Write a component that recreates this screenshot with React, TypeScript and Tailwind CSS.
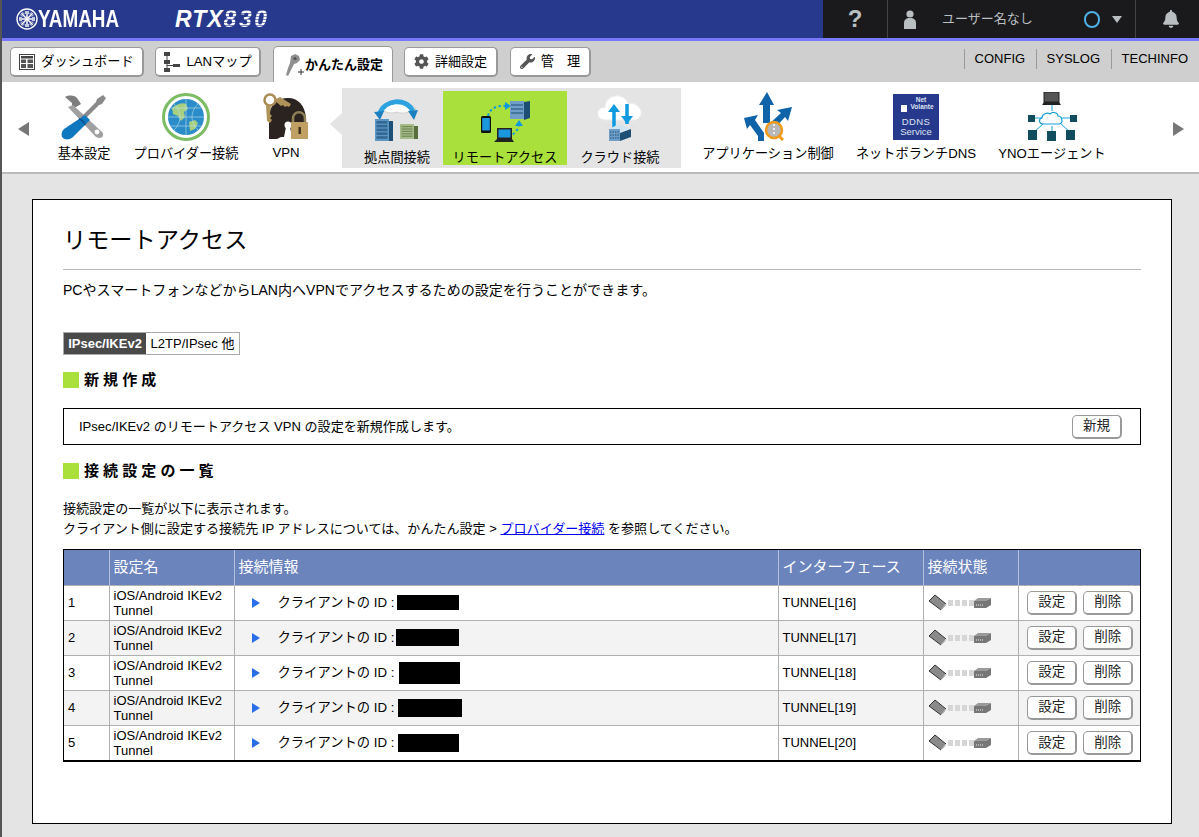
import { FaBell, FaCog, FaWrench } from "react-icons/fa";

const FONT = "[font-family:'Liberation_Sans','Noto_Sans_CJK_JP',sans-serif]";

function YamahaEmblem() {
  const angles = [0, 45, 90, 135];
  return (
    <svg className="shrink-0" width="22" height="22" viewBox="0 0 22 22" fill="none" stroke="#fff">
      <circle cx="11" cy="11" r="10" strokeWidth="1.4" />
      {angles.map((a) => (
        <g key={a} transform={`rotate(${a} 11 11)`}>
          <path d="M11 3v16" strokeWidth="1.5" />
          <path d="M9.4 3v3M12.6 3v3M9.4 19v-3M12.6 19v-3" strokeWidth="0.8" />
        </g>
      ))}
    </svg>
  );
}

function DashboardIcon() {
  return (
    <svg width="16" height="16" viewBox="0 0 16 16">
      <rect x="0.5" y="0.5" width="15" height="15" fill="#fff" stroke="#444" />
      <rect x="2" y="2" width="12" height="2.5" fill="#444" />
      <rect x="2" y="5.5" width="5" height="3.5" fill="#555" />
      <rect x="8.5" y="5.5" width="5.5" height="3.5" fill="#555" />
      <rect x="2" y="10" width="5" height="4" fill="#555" />
      <rect x="8.5" y="10" width="5.5" height="4" fill="#555" />
    </svg>
  );
}

function LanMapIcon() {
  return (
    <svg width="17" height="20" viewBox="0 0 17 20" fill="#444">
      <rect x="1" y="0" width="6" height="4" />
      <rect x="1" y="8" width="6" height="4" />
      <rect x="1" y="16" width="6" height="4" />
      <rect x="10" y="12" width="7" height="3" />
      <path d="M3.5 4h1v12h-1zM4 13h6v1H4z" />
    </svg>
  );
}

function PinIcon() {
  return (
    <svg width="20" height="24" viewBox="0 0 20 24">
      <path d="M6 3l4-2 4 2 1 4-3 3-3 1-3 6-3 6-2-1 2-7 2-5z" fill="#8f8f8f" />
      <circle cx="10" cy="5.5" r="1.6" fill="#555" />
      <path d="M16 16v6M13 19h6" stroke="#333" strokeWidth="1" />
    </svg>
  );
}

function ToolsIcon() {
  return (
    <svg width="48" height="48" viewBox="0 0 48 48">
      <path d="M4 3l7 6 0 4 4 0 5-3-4-6c-3-3-8-3-12-1z" fill="#7d7d7d" transform="translate(1 1)" />
      <path d="M13 12l29 27c2 2 1 6-2 6s-5-2-6-3L8 14z" fill="#a0a0a0" />
      <circle cx="37" cy="39" r="2.4" fill="#fff" />
      <path d="M43 2l3 3-4 6-3 1L24 27l-3-3 15-15 1-3z" fill="#8a8a8a" />
      <path d="M25 22l5 5L13 44c-3 3-8 3-10 1s-2-6 1-9z" fill="#0f76c0" />
      <path d="M19 26c3 1 5 3 6 6" stroke="#0a4f88" strokeWidth="1.5" fill="none" />
    </svg>
  );
}

function GlobeIcon() {
  return (
    <svg width="48" height="48" viewBox="0 0 48 48" fill="none">
      <circle cx="24" cy="24" r="22.5" fill="#fff" stroke="#7cbc62" strokeWidth="3" />
      <circle cx="24" cy="24" r="18" fill="#2a8cc8" />
      <path d="M10 15c4-3 9-6 14-4l2 5-4 3 1 5-4 4-3-5-5-2zM27 29l6-2 3 3-3 6-5 2z" fill="#a6d080" />
      <path d="M6 24h36M24 6v36M12 11c8 8 8 18 0 26M36 11c-8 8-8 18 0 26M9 15h30M9 33h30" stroke="#bfe0ef" strokeWidth="0.6" />
    </svg>
  );
}

function VpnIcon() {
  return (
    <svg width="50" height="48" viewBox="0 0 50 48">
      <path d="M8 46V24C8 12 17 5 27 5s17 7 18 20v21l-9 0-4-2H20l-4 2z" fill="#2b2320" />
      <circle cx="27" cy="32" r="3.5" fill="#fff" />
      <path d="M23 44l2-10h4l2 10z" fill="#fff" />
      <circle cx="9" cy="7" r="5.5" fill="none" stroke="#a98a52" strokeWidth="2.5" />
      <path d="M5 12l1 16 3 2 2-3-2-2 2-2-2-2 1-9zM13 7l6-3 11 7-2 3-2-1-2 1-2-2-2 1z" fill="#b09358" />
      <path d="M32 30v-4c0-9 12-9 12 0v4" fill="none" stroke="#8f7f55" strokeWidth="2.5" />
      <rect x="30" y="29" width="17" height="17" fill="#bfa062" />
      <rect x="37.5" y="34" width="2.4" height="7" fill="#3b2f1c" />
    </svg>
  );
}

function Building({ x, y, w, h, fill, dark }: { x: number; y: number; w: number; h: number; fill: string; dark: string }) {
  const rows = Array.from({ length: 5 }, (_, i) => i);
  return (
    <g>
      <rect x={x} y={y} width={w} height={h} fill={fill} />
      <rect x={x + w} y={y + 2} width={4} height={h - 2} fill={dark} />
      {rows.map((r) => (
        <rect key={r} x={x + 1.5} y={y + 2 + (r * (h - 3)) / 5} width={w - 3} height={(h - 3) / 5 - 1.2} fill={dark} opacity="0.65" />
      ))}
    </g>
  );
}

function SiteIcon() {
  return (
    <svg width="50" height="48" viewBox="0 0 50 48" fill="none">
      <path d="M8 14c2-3 5-3 7-4 3-4 9-4 12-1 4-2 8-1 10 2 3 0 6 1 7 4-2 3-5 3-8 3-4 2-8 1-11 0-5 2-13 1-17-4z" fill="#fff" stroke="#cfcfcf" />
      <path d="M8 19C13 6 33 3 41 17" stroke="#2ea2df" strokeWidth="5" />
      <path d="M2 18l10-1-4 9zM36 17l10-1-4 10z" fill="#1c7fc0" />
      <Building x={3} y={25} w={14} h={22} fill="#5a97c4" dark="#1e4f78" />
      <Building x={28} y={30} w={14} h={15} fill="#a7bc8a" dark="#5a6f3e" />
    </svg>
  );
}

function RemoteIcon() {
  return (
    <svg width="50" height="48" viewBox="0 0 50 48" fill="none">
      <path d="M8 17C10 9 18 6 26 7" stroke="#0f9ae0" strokeWidth="2" strokeDasharray="2.5 2.5" />
      <path d="M25 3l6 4-6 4z" fill="#0f9ae0" />
      <path d="M28 37c6-1 10-5 11-12" stroke="#0f9ae0" strokeWidth="2" strokeDasharray="2.5 2.5" />
      <path d="M35 27l4-6 4 6z" fill="#0f9ae0" />
      <rect x="30" y="2" width="14" height="18" fill="#6f9fc8" />
      <path d="M44 3l6-1v17l-6 2z" fill="#1d4f75" />
      <path d="M31 6h12M31 10h12M31 14h12" stroke="#1d4f75" />
      <rect x="1" y="17" width="10" height="17" rx="1.5" fill="#111" />
      <rect x="2.2" y="19" width="7.6" height="12.5" fill="#1a97dd" />
      <rect x="17" y="29" width="15" height="11" fill="#222" />
      <rect x="18.5" y="30.5" width="12" height="8" fill="#1a97dd" />
      <path d="M14 43l3-3h15l2 3z" fill="#222" />
    </svg>
  );
}

function CloudIcon() {
  return (
    <svg width="46" height="50" viewBox="0 0 46 50" fill="none">
      <path d="M9 28C3 28 0 24 1 20c1-4 5-5 7-4 0-8 6-13 14-12 5 1 8 4 9 8 5-2 11 1 13 7 1 5-3 9-7 9z" fill="#fff" stroke="#eee" />
      <path d="M17 38V18M30 32V12" stroke="#0f9ae0" strokeWidth="3.5" />
      <path d="M11 20l6-8 6 8zM24 24h12l-6 8z" fill="#0f9ae0" />
      <path d="M12 37l10-5 11 5-11 4z" fill="#cfe4f2" />
      <rect x="12" y="37" width="11" height="12" fill="#6f9fc8" />
      <path d="M23 41l11-4v8l-11 4z" fill="#1d4f75" />
      <path d="M13 40h9M13 43h9M13 46h9" stroke="#1d4f75" strokeDasharray="1.5 1" />
    </svg>
  );
}

function AppIcon() {
  return (
    <svg width="50" height="50" viewBox="0 0 50 50">
      <path d="M24 0l7 13h-4v18h-7V13h-4z" fill="#0f63a8" />
      <path d="M49 15l-4 14-3-4-12 13-5-5 13-12-4-3z" fill="#0f63a8" />
      <path d="M1 26l14-3-3 5 9 13v8h-6v-5l-8-11-3 4z" fill="#0f63a8" />
      <circle cx="31" cy="38" r="8" fill="#b8b8b8" stroke="#f09a1a" strokeWidth="2.5" />
      <path d="M31 32v12" stroke="#fff" strokeWidth="1.5" strokeDasharray="2 2" />
      <path d="M36 44l4 4" stroke="#f09a1a" strokeWidth="3" />
    </svg>
  );
}

function NetVolanteBadge() {
  return (
    <div className="relative flex h-[46px] w-[46px] flex-col items-center bg-[#27398c] pt-[3px] text-[#dfe3f2]">
      <span className="absolute left-[8px] top-[11px] h-[7px] w-[6px] bg-white" />
      <div className="ml-[10px] text-[6.5px] font-bold leading-[6px]">Net</div>
      <div className="ml-[12px] text-[6.5px] font-bold leading-[7px]">Volante</div>
      <div className="mt-[7px] text-[9.5px] leading-[10px] tracking-[0.4px]">DDNS</div>
      <div className="text-[9.5px] leading-[10px]">Service</div>
    </div>
  );
}

function YnoIcon() {
  const boxes: [number, number, number, number][] = [
    [1, 23, 7, 7],
    [43, 23, 7, 7],
    [1, 38, 9, 10],
    [20, 39, 9, 10],
    [39, 38, 9, 10],
  ];
  return (
    <svg width="50" height="50" viewBox="0 0 50 50" fill="none">
      <rect x="17" y="0" width="15" height="10" fill="#555" stroke="#222" />
      <path d="M15 13l2-3h15l2 3z" fill="#222" />
      <path d="M25 13v6M8 26h8M34 26h9M16 32L7 40M25 34v6M34 32l9 8" stroke="#1aa0dc" />
      <path d="M16 32c-4 0-5-5-1-6 0-4 5-6 8-4 3-3 8-1 8 2 4 0 6 7 1 8z" fill="#fff" stroke="#1aa0dc" strokeWidth="1.2" />
      {boxes.map(([x, y, w, h]) => (
        <rect key={`${x}-${y}`} x={x} y={y} width={w} height={h} fill="#124d5e" />
      ))}
    </svg>
  );
}

function StatusIcon() {
  return (
    <svg width="64" height="18" viewBox="0 0 64 18">
      <path d="M1 7l6-6 11 9-5 6z" fill="#8a8a8a" stroke="#333" strokeWidth="1" />
      <path d="M13 16l5-6" stroke="#ddd" />
      {[20, 27, 34, 41].map((x) => (
        <rect key={x} x={x} y="6" width="5" height="6" fill="#d6d6d6" />
      ))}
      <path d="M46 7h11l6-3v7l-5 3H46z" fill="#777" />
      <path d="M46 7h11l6-3H50z" fill="#9a9a9a" />
      <path d="M48 11h7" stroke="#eee" strokeDasharray="1 1" />
    </svg>
  );
}

const tabs = [
  { label: "ダッシュボード", icon: <DashboardIcon />, w: "w-[134px]" },
  { label: "LANマップ", icon: <LanMapIcon />, w: "w-[106px]" },
];

function TabButton({ className, children }: { className: string; children: React.ReactNode }) {
  return (
    <div className={`flex h-[30px] items-center justify-center gap-[6px] rounded-[5px] border border-[#999] border-r-2 border-b-2 bg-white text-[13.2px] ${className}`}>
      {children}
    </div>
  );
}

function NavItem({ label, icon, className = "", top = "pt-[11px]", gap = "mt-[4px]" }: { label: string; icon: React.ReactNode; className?: string; top?: string; gap?: string }) {
  return (
    <div className={`flex flex-col items-center whitespace-nowrap text-[13.2px] leading-[18px] ${top} ${className}`}>
      <div className="flex h-[48px] items-center justify-center">{icon}</div>
      <div className={gap}>{label}</div>
    </div>
  );
}

function SectionTitle({ children }: { children: React.ReactNode }) {
  return (
    <div className="flex items-center gap-[5px]">
      <span className="h-[16px] w-[16px] bg-[#a9e03c]" />
      <h2 className="text-[15px] font-bold leading-[16px] tracking-[4.1px]">{children}</h2>
    </div>
  );
}

function SmallButton({ label }: { label: string }) {
  return (
    <button className="h-[24px] w-[50px] rounded-[5px] border border-[#999] border-r-2 border-b-2 bg-white text-[13.5px] leading-none text-[#222]">
      {label}
    </button>
  );
}

const rows = [
  { no: 1, tunnel: "TUNNEL[16]", w: "w-[62px] h-[15px]", ml: "ml-[3px]" },
  { no: 2, tunnel: "TUNNEL[17]", w: "w-[63px] h-[17px]", ml: "ml-[2px]" },
  { no: 3, tunnel: "TUNNEL[18]", w: "w-[61px] h-[22px]", ml: "ml-[5px]" },
  { no: 4, tunnel: "TUNNEL[19]", w: "w-[64px] h-[18px]", ml: "ml-[4px]" },
  { no: 5, tunnel: "TUNNEL[20]", w: "w-[61px] h-[18px]", ml: "ml-[4px]" },
];

export default function App() {
  return (
    <div className={`h-[837px] w-[1199px] overflow-hidden border-l-2 border-[#555] bg-[#e4e4e4] text-black ${FONT}`}>
      {/* top bar */}
      <header className="flex h-[38px] bg-[#27398c] text-white">
        <div className="flex w-[140px] shrink-0 items-center pl-[14px]">
          <YamahaEmblem />
          <span className="ml-[0px] origin-left scale-x-[0.82] text-[23px] font-bold leading-none">YAMAHA</span>
        </div>
        <div className="ml-[33px] flex items-center text-[23px] font-bold italic leading-none tracking-[1px]">
          RTX
          <span className="bg-[repeating-linear-gradient(180deg,#fff_0px,#fff_2px,#7f8bc0_2px,#7f8bc0_3px)] bg-clip-text tracking-[2.5px] text-transparent">830</span>
        </div>
        <div className="ml-auto flex w-[376px] bg-[#1a1a1c] text-[#b9bec0]">
          <div className="flex w-[65px] items-center justify-center border-r border-[#444] text-[24px] font-bold">?</div>
          <div className="flex w-[248px] items-center border-r border-[#444] pl-[16px]">
            <svg width="12" height="19" viewBox="0 0 12 19" fill="#b9bec0">
              <circle cx="6" cy="4" r="3.6" />
              <path d="M0 19v-6c0-3 2-5 6-5s6 2 6 5v6z" />
            </svg>
            <span className="ml-[26px] text-[13px]">ユーザー名なし</span>
            <span className="ml-[51px] h-[17px] w-[16px] rounded-full border-2 border-[#4eb0e8]" />
            <span className="ml-[12px] h-0 w-0 border-x-[5px] border-t-[7px] border-x-transparent border-t-[#b9bec0]" />
          </div>
          <div className="flex flex-1 items-center justify-center pl-[6px] text-[18px]">
            <FaBell />
          </div>
        </div>
      </header>
      <div className="h-[3px] bg-[#7878ff]" />

      {/* tab row */}
      <div className="flex h-[41px] bg-[#cfcfcf] pl-[8px] pr-[11px]">
        <div className="flex gap-[11px] pt-[6px]">
          {tabs.map((t) => (
            <TabButton key={t.label} className={t.w}>
              {t.icon}
              {t.label}
            </TabButton>
          ))}
          <div className="-mt-[1px] ml-[1px] flex h-[36px] w-[120px] items-center justify-center rounded-t-[5px] border border-b-0 border-[#999] bg-white pl-[2px] text-[13px] font-bold">
            <PinIcon />
            かんたん設定
          </div>
          <TabButton className="w-[94px]">
            <FaCog className="text-[15px] text-[#555]" />
            <span className="text-[13px]">詳細設定</span>
          </TabButton>
          <TabButton className="ml-[1px] w-[81px]">
            <FaWrench className="text-[15px] text-[#555]" />
            <span className="whitespace-pre">管　理</span>
          </TabButton>
        </div>
        <div className="ml-auto flex h-[16px] translate-y-[10px] items-center text-[13px] [&>a]:border-l [&>a]:border-[#999] [&>a]:pl-[10px]">
          <a className="w-[72px]">CONFIG</a>
          <a className="w-[75px]">SYSLOG</a>
          <a>TECHINFO</a>
        </div>
      </div>

      {/* icon menu */}
      <nav className="flex h-[92px] border-b-2 border-[#bbb] bg-white pl-[16px]">
        <div className="mt-[40px] h-0 w-0 border-y-[7px] border-r-[11px] border-y-transparent border-r-[#777]" />
        <NavItem label="基本設定" icon={<ToolsIcon />} className="ml-[5px] w-[100px]" />
        <NavItem label="プロバイダー接続" icon={<GlobeIcon />} className="w-[104px]" />
        <NavItem label="VPN" icon={<VpnIcon />} className="w-[96px]" gap="mt-[3px]" />
        <div className="relative ml-[8px] mt-[6px] flex h-[80px] w-[339px] bg-[#e4e4e4]">
          <span className="absolute -left-[12px] top-[25px] h-0 w-0 border-y-[11px] border-r-[12px] border-y-transparent border-r-[#e4e4e4]" />
          <NavItem label="拠点間接続" icon={<SiteIcon />} className="w-[101px] pl-[9px]" top="pt-[6px]" gap="mt-[7px]" />
          <NavItem label="リモートアクセス" icon={<RemoteIcon />} className="mt-[3px] h-[74px] w-[124px] bg-[#a9e03c]" top="pt-[8px]" gap="mt-[2px]" />
          <NavItem label="クラウド接続" icon={<CloudIcon />} className="w-[114px] pr-[8px]" top="pt-[5px]" gap="mt-[8px]" />
        </div>
        <NavItem label="アプリケーション制御" icon={<AppIcon />} className="ml-[9px] w-[156px]" />
        <NavItem label="ネットボランチDNS" icon={<NetVolanteBadge />} className="w-[140px]" />
        <NavItem label="YNOエージェント" icon={<YnoIcon />} className="w-[132px]" />
        <div className="ml-[55px] mt-[40px] h-0 w-0 border-y-[7px] border-l-[11px] border-y-transparent border-l-[#777]" />
      </nav>

      {/* main panel */}
      <main className="ml-[30px] mt-[25px] h-[625px] w-[1140px] border border-black bg-white px-[30px]">
        <h1 className="mt-[24px] border-b border-[#bbb] pb-[12px] text-[23.2px] font-normal leading-[33px]">リモートアクセス</h1>
        <p className="mt-[11px] text-[14.05px] leading-[18px]">PCやスマートフォンなどからLAN内へVPNでアクセスするための設定を行うことができます。</p>

        <div className="mt-[33px] flex h-[23px] w-[177px] border border-[#aaa] text-[13px]">
          <span className="flex w-[82px] items-center justify-center bg-[#4a4a4a] font-bold text-white">IPsec/IKEv2</span>
          <span className="flex flex-1 items-center justify-center">L2TP/IPsec 他</span>
        </div>

        <div className="mt-[17px]">
          <SectionTitle>新規作成</SectionTitle>
        </div>

        <div className="mt-[20px] flex h-[37px] items-center justify-between border border-black pl-[15px] pr-[18px] text-[13.05px]">
          <span>IPsec/IKEv2 のリモートアクセス VPN の設定を新規作成します。</span>
          <SmallButton label="新規" />
        </div>

        <div className="mt-[18px]">
          <SectionTitle>接続設定の一覧</SectionTitle>
        </div>

        <p className="mt-[20px] text-[13.05px] leading-[20px]">
          接続設定の一覧が以下に表示されます。
          <br />
          クライアント側に設定する接続先 IP アドレスについては、かんたん設定 &gt; <a className="text-[#0000ee] underline">プロバイダー接続</a> を参照してください。
        </p>

        <div className="mt-[10px] w-[1078px] border border-b-2 border-black">
          <table className="w-full table-fixed border-collapse border-hidden text-[13px]">
            <colgroup>
              <col className="w-[45px]" />
              <col className="w-[125px]" />
              <col className="w-[544px]" />
              <col className="w-[145px]" />
              <col className="w-[95px]" />
              <col />
            </colgroup>
            <thead>
              <tr className="h-[35px] bg-[#6b84bc] text-left text-[15px] font-normal text-white [&>th]:border-x [&>th]:border-[#b4c0dc] [&>th]:px-[4px] [&>th]:font-normal">
                <th />
                <th>設定名</th>
                <th>接続情報</th>
                <th>インターフェース</th>
                <th>接続状態</th>
                <th />
              </tr>
            </thead>
            <tbody>
              {rows.map((r) => (
                <tr key={r.no} className="h-[35px] even:bg-[#f3f3f3] [&>td]:border [&>td]:border-[#b0b0b0] [&>td]:px-[4px]">
                  <td>{r.no}</td>
                  <td className="leading-[15px]">iOS/Android IKEv2 Tunnel</td>
                  <td>
                    <div className="flex items-center pl-[13px]">
                      <span className="h-0 w-0 border-y-[5px] border-l-[8px] border-y-transparent border-l-[#2b6fe8]" />
                      <span className="ml-[18px] text-[13.3px]">クライアントの ID :</span>
                      <span className={`bg-black ${r.w} ${r.ml}`} />
                    </div>
                  </td>
                  <td>{r.tunnel}</td>
                  <td>
                    <StatusIcon />
                  </td>
                  <td>
                    <div className="ml-[2px] flex justify-center gap-[6px]">
                      <SmallButton label="設定" />
                      <SmallButton label="削除" />
                    </div>
                  </td>
                </tr>
              ))}
            </tbody>
          </table>
        </div>
      </main>
    </div>
  );
}
